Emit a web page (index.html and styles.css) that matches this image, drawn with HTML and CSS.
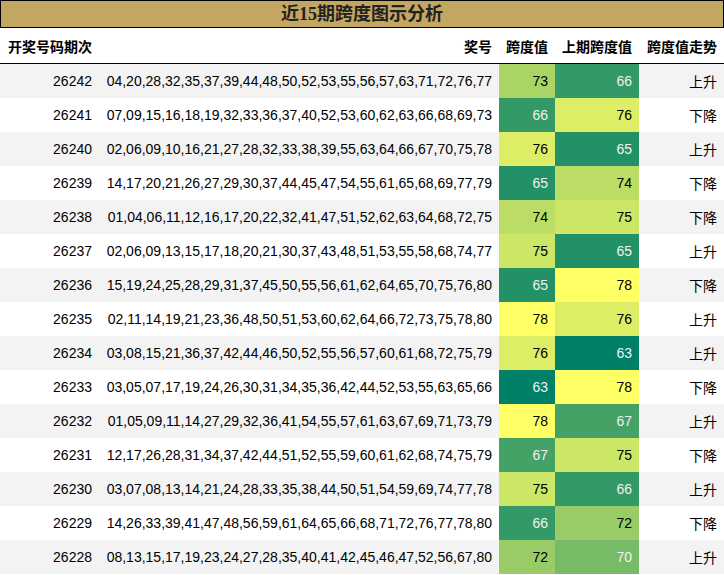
FILE: index.html
```html
<!DOCTYPE html>
<html lang="zh">
<head>
<meta charset="utf-8">
<link rel="stylesheet" href="styles.css">
</head>
<body>
<div class="title">近15期跨度图示分析</div>
<table class="grid">
<colgroup>
<col class="c1"><col class="c2"><col class="c3"><col class="c4"><col class="c5">
</colgroup>
<thead>
<tr><th class="left">开奖号码期次</th><th>奖号</th><th>跨度值</th><th>上期跨度值</th><th>跨度值走势</th></tr>
</thead>
<tbody>
<tr><td>26242</td><td>04,20,28,32,35,37,39,44,48,50,52,53,55,56,57,63,71,72,76,77</td><td class="v73">73</td><td class="v66">66</td><td>上升</td></tr>
<tr><td>26241</td><td>07,09,15,16,18,19,32,33,36,37,40,52,53,60,62,63,66,68,69,73</td><td class="v66">66</td><td class="v76">76</td><td>下降</td></tr>
<tr><td>26240</td><td>02,06,09,10,16,21,27,28,32,33,38,39,55,63,64,66,67,70,75,78</td><td class="v76">76</td><td class="v65">65</td><td>上升</td></tr>
<tr><td>26239</td><td>14,17,20,21,26,27,29,30,37,44,45,47,54,55,61,65,68,69,77,79</td><td class="v65">65</td><td class="v74">74</td><td>下降</td></tr>
<tr><td>26238</td><td>01,04,06,11,12,16,17,20,22,32,41,47,51,52,62,63,64,68,72,75</td><td class="v74">74</td><td class="v75">75</td><td>下降</td></tr>
<tr><td>26237</td><td>02,06,09,13,15,17,18,20,21,30,37,43,48,51,53,55,58,68,74,77</td><td class="v75">75</td><td class="v65">65</td><td>上升</td></tr>
<tr><td>26236</td><td>15,19,24,25,28,29,31,37,45,50,55,56,61,62,64,65,70,75,76,80</td><td class="v65">65</td><td class="v78">78</td><td>下降</td></tr>
<tr><td>26235</td><td>02,11,14,19,21,23,36,48,50,51,53,60,62,64,66,72,73,75,78,80</td><td class="v78">78</td><td class="v76">76</td><td>上升</td></tr>
<tr><td>26234</td><td>03,08,15,21,36,37,42,44,46,50,52,55,56,57,60,61,68,72,75,79</td><td class="v76">76</td><td class="v63">63</td><td>上升</td></tr>
<tr><td>26233</td><td>03,05,07,17,19,24,26,30,31,34,35,36,42,44,52,53,55,63,65,66</td><td class="v63">63</td><td class="v78">78</td><td>下降</td></tr>
<tr><td>26232</td><td>01,05,09,11,14,27,29,32,36,41,54,55,57,61,63,67,69,71,73,79</td><td class="v78">78</td><td class="v67">67</td><td>上升</td></tr>
<tr><td>26231</td><td>12,17,26,28,31,34,37,42,44,51,52,55,59,60,61,62,68,74,75,79</td><td class="v67">67</td><td class="v75">75</td><td>下降</td></tr>
<tr><td>26230</td><td>03,07,08,13,14,21,24,28,33,35,38,44,50,51,54,59,69,74,77,78</td><td class="v75">75</td><td class="v66">66</td><td>上升</td></tr>
<tr><td>26229</td><td>14,26,33,39,41,47,48,56,59,61,64,65,66,68,71,72,76,77,78,80</td><td class="v66">66</td><td class="v72">72</td><td>下降</td></tr>
<tr><td>26228</td><td>08,13,15,17,19,23,24,27,28,35,40,41,42,45,46,47,52,56,67,80</td><td class="v72">72</td><td class="v70">70</td><td>上升</td></tr>
</tbody>
</table>
</body>
</html>
```

FILE: styles.css
```css
html, body {
  margin: 0;
  padding: 0;
  background: #ffffff;
}
body {
  font-family: "Liberation Sans", "Noto Sans CJK SC", sans-serif;
  font-size: 14px;
  color: #000;
  width: 724px;
}
.title {
  box-sizing: border-box;
  height: 28px;
  line-height: 26px;
  border: 1px solid #000;
  background: #c4a663;
  text-align: center;
  font-family: "Liberation Serif", "Noto Sans CJK SC", serif;
  font-weight: bold;
  font-size: 18px;
  color: #222;
}
.grid {
  width: 724px;
  border-collapse: collapse;
  table-layout: fixed;
}
.c1 { width: 99px; }
.c2 { width: 400px; }
.c3 { width: 56px; }
.c4 { width: 84px; }
.c5 { width: 85px; }
.grid th {
  height: 35px;
  padding: 0 7px;
  text-align: right;
  font-weight: bold;
  font-size: 14px;
  border-bottom: 1px solid #000;
  font-family: "Noto Sans CJK SC", sans-serif;
  white-space: nowrap;
}
.grid th.left { text-align: left; padding-left: 8px; }
.grid td {
  height: 34px;
  padding: 0 7px;
  text-align: right;
  white-space: nowrap;
}
.grid tbody tr:nth-child(odd) { background: #f3f3f3; }
.grid tbody tr:nth-child(even) { background: #ffffff; }
.grid td.v63 { background: #008066; color: #f1f1f1; }
.grid td.v65 { background: #229166; color: #f1f1f1; }
.grid td.v66 { background: #339966; color: #f1f1f1; }
.grid td.v67 { background: #44a266; color: #f1f1f1; }
.grid td.v70 { background: #77bb66; color: #f1f1f1; }
.grid td.v72 { background: #99cc66; color: #000; }
.grid td.v73 { background: #aad466; color: #000; }
.grid td.v74 { background: #bbdd66; color: #000; }
.grid td.v75 { background: #cce666; color: #000; }
.grid td.v76 { background: #ddee66; color: #000; }
.grid td.v78 { background: #ffff66; color: #000; }
```
